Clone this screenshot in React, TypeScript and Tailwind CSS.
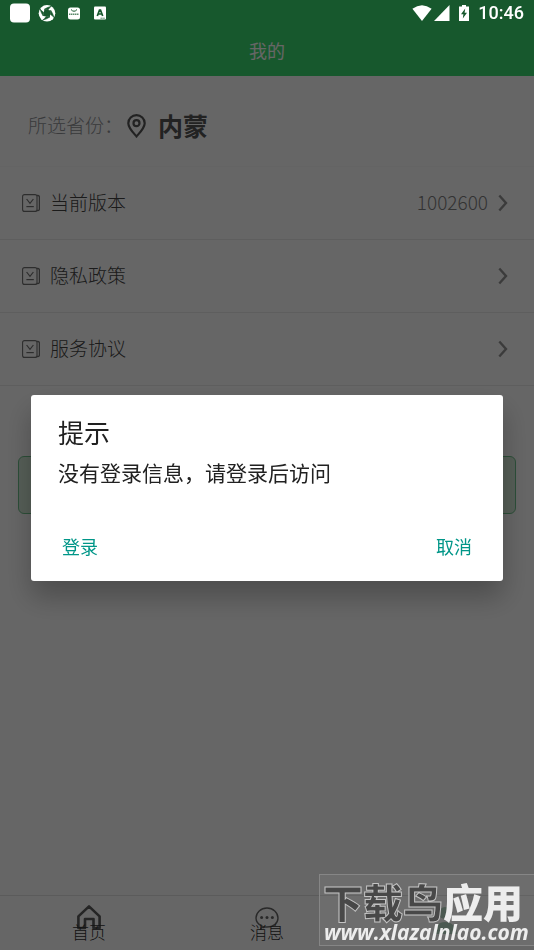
import type { ReactNode } from 'react';

const menuItems = [
  { label: '当前版本', value: '1002600' },
  { label: '隐私政策', value: '' },
  { label: '服务协议', value: '' },
];

const StatusBar = () => (
  <div className="absolute inset-x-0 top-0 z-30 flex h-[26px] items-center justify-between px-[10px] text-white">
    <div className="flex items-center gap-[7px]">
      <svg className="h-5 w-5" viewBox="0 0 20 20" fill="currentColor">
        <rect x="0" y="0.5" width="20" height="19" rx="4" />
      </svg>
      <svg className="h-5 w-5" viewBox="0 0 20 20">
        <circle cx="10" cy="10.3" r="8.3" fill="currentColor" />
        <g fill="#17582d" stroke="#17582d" strokeWidth="0.6">
          <path d="M7.4 6.2 L13.8 7.4 L12.8 14 L6.2 13 Z" stroke="none" />
          <path d="M7.4 6.2 Q10 4.4 14.4 3.2 Q11.6 5.4 11 7 Z" />
          <path d="M13.8 7.4 Q15.8 10 17 14.6 Q14.8 12 13.2 11.2 Z" />
          <path d="M12.8 14 Q10 16 5.6 17.2 Q8.4 15.2 9 13.4 Z" />
          <path d="M6.2 13 Q4.2 10 3 6 Q5.2 8.6 6.8 9.4 Z" />
        </g>
      </svg>
      <svg className="h-5 w-5" viewBox="0 0 20 20">
        <rect x="4" y="4.5" width="12" height="12" rx="2.5" fill="currentColor" />
        <path d="M7 6.5 Q10 10 13 6.5" fill="none" stroke="#17582d" strokeWidth="1" />
        <path d="M5 11.3 H15" stroke="#17582d" strokeWidth="1.6" strokeDasharray="1.5 0.5" opacity="0.7" />
      </svg>
      <svg className="h-5 w-5" viewBox="0 0 20 20">
        <rect x="3" y="3.5" width="12" height="13" rx="1" fill="currentColor" />
        <path d="M6.3 13 L8.5 7 H9.5 L11.7 13 M7.2 11 H10.8" fill="none" stroke="#17582d" strokeWidth="1.7" />
        <path d="M9.5 15.2 H14" stroke="#17582d" strokeWidth="0.8" strokeDasharray="1.4 0.5" />
      </svg>
    </div>
    <div className="flex items-center">
      <svg className="h-4 w-[20px]" viewBox="0 0 20 16" fill="currentColor">
        <path d="M10 16 L0.4 3.8 Q10 -3.2 19.6 3.8 Z" />
      </svg>
      <svg className="ml-[2px] h-4 w-4" viewBox="0 0 16 16" fill="currentColor">
        <path d="M15.5 0 V16 H0 Z" />
      </svg>
      <svg className="ml-2 h-4 w-3" viewBox="0 0 12 16">
        <path d="M4 0 H8 V1.5 H11 V16 H1 V1.5 H4 Z" fill="currentColor" />
        <path d="M7.2 3.6 L3 9.2 H5.4 L4.8 13.4 L9 7.8 H6.6 Z" fill="#17582d" />
      </svg>
      <span className="ml-2 font-['Roboto',sans-serif] text-[18px] leading-[26px] font-medium">10:46</span>
    </div>
  </div>
);

const BookIcon = () => (
  <svg className="h-[18px] w-[18px] text-[#707070]" viewBox="0 0 18 18" fill="none" stroke="currentColor">
    <rect x="0.6" y="0.6" width="14.4" height="16.8" rx="2" strokeWidth="1.1" />
    <path d="M15 1.5 H16 Q17.4 1.5 17.4 3 V15 Q17.4 16.5 16 16.5 H15" strokeWidth="1.3" />
    <path d="M4.6 5 L8 9.3 L11.4 5" strokeWidth="1.2" />
    <path d="M4.4 12.6 H11.8" strokeWidth="1.2" />
  </svg>
);

const Chevron = () => (
  <svg className="h-[18px] w-[10px] text-[#959595]" viewBox="0 0 10 18" fill="none" stroke="currentColor" strokeWidth="2.4">
    <path d="M1.3 1.5 L8 9 L1.3 16.5" />
  </svg>
);

const Tab = ({ label, children }: { label: string; children: ReactNode }) => (
  <a href="#" className="flex flex-1 flex-col items-center pt-2">
    {children}
    <span className="-mt-2 text-[17px] leading-5 font-light text-[#333]">{label}</span>
  </a>
);

const Watermark = () => (
  <div className="fixed right-0 bottom-[4px] z-40 h-[72px] w-[215px] border border-r-0 border-[#868686] bg-white/5 pt-[6px] text-[#ededed]">
    <div className="flex pl-[3px] text-[40px] leading-[40px] font-black whitespace-nowrap">
      <span className="text-[#484848] [-webkit-text-stroke:1px_#c4c4c4]">下载鸟</span>
      <span>应用</span>
    </div>
    <div className="pl-1 font-['Open_Sans',sans-serif] text-[21px] leading-[22px] font-bold italic">
      www.xlazalnlao.com
    </div>
  </div>
);

export default function App() {
  return (
    <div className="relative flex min-h-screen flex-col bg-white font-['Noto_Sans_CJK_SC',sans-serif]">
      <StatusBar />

      <header className="bg-[#3adc70] pt-[26px]">
        <h1 className="pb-[2px] text-center text-[18px] leading-[48px] text-white">我的</h1>
      </header>

      <main className="flex-1">
        <div className="flex h-[91px] items-center border-b border-[#fafafa] pt-[9px] pl-7">
          <span className="text-[19px] font-light text-[#909296]">所选省份：</span>
          <svg className="ml-1 h-6 w-[19px] text-[#555]" viewBox="0 0 19 24" fill="none" stroke="currentColor">
            <path d="M9.5 22.4 C5.5 18 1.3 13.8 1.3 9.2 A8.2 8 0 0 1 17.7 9.2 C17.7 13.8 13.5 18 9.5 22.4 Z" strokeWidth="2.2" />
            <circle cx="9.5" cy="9.2" r="3" strokeWidth="2.2" />
          </svg>
          <span className="ml-3 text-[25px] font-bold text-[#555]">内蒙</span>
        </div>

        <ul>
          {menuItems.map((item) => (
            <li key={item.label} className="border-b border-[#ebebeb]">
              <a href="#" className="flex h-[72px] items-center pr-[26px] pb-px pl-[22px]">
                <BookIcon />
                <span className="ml-[10px] flex-1 text-[19px] font-light text-[#444]">{item.label}</span>
                <span className="mr-[10px] text-[19px] font-light text-[#808080]">{item.value}</span>
                <Chevron />
              </a>
            </li>
          ))}
        </ul>

        <div className="px-[18px] pt-[70px]">
          <button
            type="button"
            aria-label="退出登录"
            className="h-[58px] w-full rounded-md border border-[#6fc48c] bg-[#d6ebd9]"
          />
        </div>
      </main>

      <nav className="flex h-[55px] border-t border-[#e4e4e4]">
        <Tab label="首页">
          <svg className="h-[26px] w-[26px] text-[#5c5c5c]" viewBox="0 0 26 26" fill="none" stroke="currentColor" strokeWidth="2.6">
            <path d="M2.4 12.4 L13 2.4 L23.6 12.4 V24 H17.5 V15 H9 V24 H2.4 Z" strokeLinejoin="round" />
          </svg>
        </Tab>
        <Tab label="消息">
          <svg className="h-[26px] w-[26px] text-[#686868]" viewBox="0 0 26 26" fill="none" stroke="currentColor" strokeWidth="1.4">
            <path d="M8 22.2 C4.6 20.6 2 17.6 2 14 C2 8.4 6.9 4 13 4 S24 8.4 24 14 S19.1 23 13 23 Q11 23 9.6 22.7 L7 24.4 Z" />
            <g fill="currentColor" stroke="none">
              <circle cx="7.6" cy="13.6" r="1.5" />
              <circle cx="13" cy="13.6" r="1.5" />
              <circle cx="18.4" cy="13.6" r="1.5" />
            </g>
          </svg>
        </Tab>
        <a href="#" aria-label="我的" className="flex flex-1 justify-center pt-2">
          <svg className="h-10 w-6 text-[#a8cdb6]" viewBox="0 0 24 40" fill="currentColor">
            <circle cx="12" cy="9" r="6" />
            <path d="M0 30 Q2 18 12 18 T24 30 Z" />
          </svg>
        </a>
      </nav>

      <div className="fixed inset-0 z-20 flex items-center justify-center bg-black/60 px-[31px] pt-[26px]">
        <div
          role="dialog"
          aria-labelledby="dialog-title"
          className="w-full rounded-[3px] bg-white px-[27px] pt-[17px] pb-[17px] text-[#212121] shadow-[0_16px_28px_rgba(0,0,0,0.26)]"
        >
          <h2 id="dialog-title" className="text-[26px] leading-10">提示</h2>
          <p className="text-[21px] leading-10">没有登录信息，请登录后访问</p>
          <div className="mt-9 flex justify-between px-1 text-[18px] leading-9 text-[#009688]">
            <button type="button">登录</button>
            <button type="button">取消</button>
          </div>
        </div>
      </div>

      <Watermark />
    </div>
  );
}
